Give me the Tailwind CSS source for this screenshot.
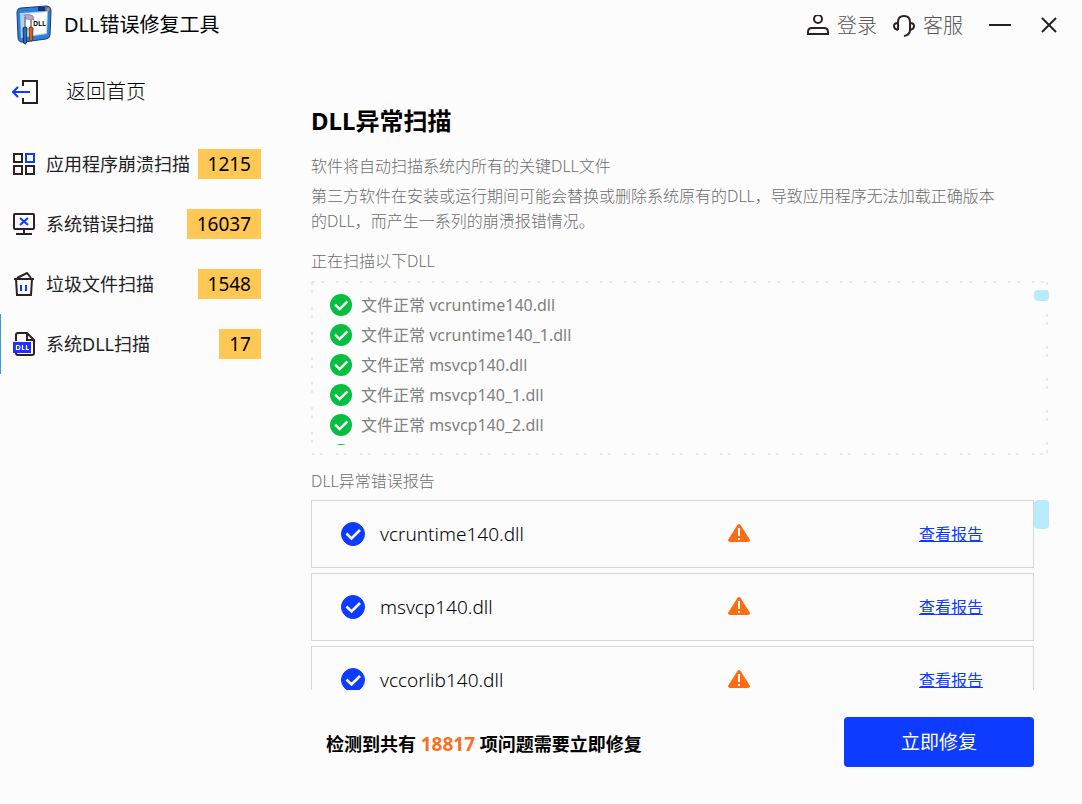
<!DOCTYPE html>
<html lang="zh-CN">
<head>
  <meta charset="UTF-8" />
  <meta name="viewport" content="width=device-width, initial-scale=1.0" />
  <title>DLL错误修复工具</title>
  <script src="https://cdn.jsdelivr.net/npm/@tailwindcss/browser@4"></script>
</head>
<body class="bg-[#fcfcfc] text-[#222] h-screen flex flex-col overflow-hidden font-['Noto_Sans','Noto_Sans_CJK_SC',sans-serif]">

  <!-- Shared icons -->
  <svg class="hidden">
    <symbol id="tick" viewBox="0 0 24 24">
      <path d="M5.500 11.500l5 5L19 8" fill="none" stroke="#fff" stroke-width="2.600" />
    </symbol>
    <symbol id="warn" viewBox="0 0 22 20">
      <path d="M9.400 1Q11-.8 12.600 1L21.600 15.200Q22.600 18 20 18H2Q-.6 18 .4 15.200Z" fill="#ff6b12" />
      <path d="M10 4h2v8h-2zM10 14h2v2h-2z" fill="#fff" />
    </symbol>
  </svg>

  <!-- Title bar -->
  <header class="flex items-center justify-between h-[50px] pl-4 pr-6 shrink-0">
    <div class="flex items-center gap-3">
      <svg class="w-9 h-10" viewBox="0 0 36 40">
        <path d="M5 3L30 1Q35 1 35 6L34 30Q34 33 30 34L8 37Q2 38 2 32L1 8Q1 3 5 3Z" fill="#2f7fd6" stroke="#173a78" />
        <path d="M4 8L32 6L31 29L5 33Z" fill="#a9d3f5" />
        <path d="M8 9L31 7L30 28L9 31Z" fill="#fff" />
        <path d="M22 2h7v4h-7z" fill="#16337a" />
        <circle cx="32" cy="4.500" r="1.800" fill="#e07a2a" />
        <path d="M8 10q5-2 9 1l1 4-8-1z" fill="#b9a5c8" stroke="#6d5a78" stroke-width=".6" />
        <path d="M9 12v13M15 15v10" stroke="#777" stroke-width="1.500" />
        <path d="M7 23q2-2 4 0l-.5 15q-1 2-3 0z" fill="#1f6fc0" stroke="#16305c" />
        <path d="M13 23q2-2 4 0l-.5 12q-1 2-3 0z" fill="#d2641e" stroke="#7a3510" />
        <text x="17" y="21" font-size="7" font-weight="bold" fill="#111">DLL</text>
      </svg>
      <h1 class="text-xl leading-6 text-black">DLL错误修复工具</h1>
    </div>
    <div class="flex items-center">
      <button class="flex items-center gap-2 mr-4 pt-0.5 text-xl leading-6 text-[#555] font-light">
        <svg class="w-[22px] h-[22px]" viewBox="0 0 22 22" fill="none" stroke="#2b2126" stroke-width="2">
          <circle cx="11" cy="4" r="4" />
          <path d="M1 19v-2q0-4 4-4h12q4 0 4 4v2z" />
        </svg>
        登录
      </button>
      <button class="flex items-center gap-2 mr-[26px] pt-0.5 text-xl leading-6 text-[#555] font-light">
        <svg class="w-[22px] h-[22px]" viewBox="0 0 22 22" fill="none" stroke="#2b2126" stroke-width="2">
          <path d="M5 15V7q0-6 6-6t6 6v8q0 5-6 6" />
          <path d="M5 8Q1 8 1 11t4 4M17 8q4 0 4 3t-4 4" />
        </svg>
        客服
      </button>
      <button aria-label="最小化" class="mr-[29px]">
        <svg class="w-[22px] h-[18px]" viewBox="0 0 22 18" stroke="#222" stroke-width="2"><path d="M0 9h22" /></svg>
      </button>
      <button aria-label="关闭">
        <svg class="w-[18px] h-[18px]" viewBox="0 0 18 18" stroke="#222" stroke-width="2"><path d="M2 2l14 14M16 2L2 16" /></svg>
      </button>
    </div>
  </header>

  <div class="flex flex-1 min-h-0">

    <!-- Sidebar -->
    <nav class="w-[281px] shrink-0 pt-6">
      <a href="#" class="flex items-center gap-[26px] h-9 pl-3 mb-6 text-xl leading-6 font-light text-black">
        <svg class="w-7 h-[26px]" viewBox="0 0 28 26" fill="none" stroke-width="2">
          <path d="M11 7V2h14v22H11v-5" stroke="#222" />
          <path d="M18 13H1M6 8l-5 5 5 5" stroke="#0d3bff" />
        </svg>
        返回首页
      </a>
      <a href="#" class="flex items-center h-[60px] pl-3 pr-5 text-lg leading-6 border-l border-transparent">
        <svg class="w-[22px] h-[22px] mr-[11px]" viewBox="0 0 22 22" fill="none" stroke="#2b2126" stroke-width="2">
          <path d="M1 1h8v8H1zM1 13h8v8H1zM13 13h8v8h-8z" />
          <path d="M13 1h8v8h-8z" stroke="#0d3bff" />
        </svg>
        应用程序崩溃扫描
        <span class="ml-auto bg-[#ffc753] text-black text-[19px] leading-[30px] px-[10px]">1215</span>
      </a>
      <a href="#" class="flex items-center h-[60px] pl-3 pr-5 text-lg leading-6 border-l border-transparent">
        <svg class="w-[22px] h-[22px] mr-[11px]" viewBox="0 0 22 22" fill="none" stroke="#2b2126" stroke-width="2">
          <rect x="1" y="1" width="20" height="15" rx="1" />
          <path d="M11 17v4M3 21h16" />
          <path d="M7 5l8 7M15 5l-8 7" stroke="#0d3bff" />
        </svg>
        系统错误扫描
        <span class="ml-auto bg-[#ffc753] text-black text-[19px] leading-[30px] px-[10px]">16037</span>
      </a>
      <a href="#" class="flex items-center h-[60px] pl-3 pr-5 text-lg leading-6 border-l border-transparent">
        <svg class="w-[22px] h-6 mr-[11px]" viewBox="0 0 22 24" fill="none" stroke="#2b2126" stroke-width="2">
          <path d="M1 7h20M3 7l1 16h14l1-16" />
          <path d="M4 6l10-5 4 5" />
          <path d="M8 13v6M13 13v6" stroke="#0d3bff" />
        </svg>
        垃圾文件扫描
        <span class="ml-auto bg-[#ffc753] text-black text-[19px] leading-[30px] px-[10px]">1548</span>
      </a>
      <a href="#" aria-current="page" class="flex items-center h-[60px] pl-3 pr-5 text-lg leading-6 border-l border-[#3a9ad9]">
        <svg class="w-[22px] h-6 mr-[11px]" viewBox="0 0 22 24" fill="none" stroke="#2b2126" stroke-width="2">
          <path d="M3 9V3q0-2 2-2h9l7 7v13q0 2-2 2H5q-2 0-2-2" />
          <path d="M14 1v7h7" />
          <rect x="0" y="10" width="18" height="11" fill="#1c33ff" stroke="none" />
          <path d="M3.500 13.500v4h2q1.500 0 1.500-2t-1.500-2zM9.500 13v4.500h2M13.500 13v4.500h2.500" stroke="#fff" stroke-width="1.200" />
        </svg>
        系统DLL扫描
        <span class="ml-auto bg-[#ffc753] text-black text-[19px] leading-[30px] px-[10px]">17</span>
      </a>
    </nav>

    <!-- Scan page -->
    <main class="flex-1 min-w-0 flex flex-col pl-[30px] pr-[33px] pt-[55px] pb-[37px]">
      <h2 class="text-2xl leading-8 font-bold text-black">DLL异常扫描</h2>
      <div class="pt-[17px] pr-12 text-base leading-[25px] text-[#6c6c6c] font-light">
        <p class="mb-[5px]">软件将自动扫描系统内所有的关键DLL文件</p>
        <p>第三方软件在安装或运行期间可能会替换或删除系统原有的DLL，导致应用程序无法加载正确版本的DLL，而产生一系列的崩溃报错情况。</p>
      </div>
      <p class="mt-[15px] text-base leading-[25px] text-[#6c6c6c] font-light">正在扫描以下DLL</p>

      <!-- Scan log -->
      <section class="relative mt-[7px] h-[174px] py-[9px] shrink-0">
        <svg class="absolute inset-0 w-full h-full pointer-events-none" stroke="#d6d6d6" stroke-width="1">
          <line x1="1" y1="1" x2="100%" y2="1" stroke-dasharray="3 6 3 12" />
          <line x1="1" y1="173" x2="100%" y2="173" stroke-dasharray="3 5 3 13" />
          <line x1="1" y1="1" x2="1" y2="172" stroke-dasharray="3 5 3 14" />
          <g class="translate-x-full"><line x1="-2" y1="1" x2="-2" y2="172" stroke-dasharray="3 5 3 21" /></g>
        </svg>
        <div class="flex h-[155px]">
          <ul class="flex-1 overflow-hidden pl-[19px] text-base text-[#808080]">
            <li class="flex items-center gap-[9px] h-[30px]"><svg class="w-[22px] h-[22px] rounded-full bg-[#06bf40]"><use href="#tick" /></svg>文件正常 vcruntime140.dll</li>
            <li class="flex items-center gap-[9px] h-[30px]"><svg class="w-[22px] h-[22px] rounded-full bg-[#06bf40]"><use href="#tick" /></svg>文件正常 vcruntime140_1.dll</li>
            <li class="flex items-center gap-[9px] h-[30px]"><svg class="w-[22px] h-[22px] rounded-full bg-[#06bf40]"><use href="#tick" /></svg>文件正常 msvcp140.dll</li>
            <li class="flex items-center gap-[9px] h-[30px]"><svg class="w-[22px] h-[22px] rounded-full bg-[#06bf40]"><use href="#tick" /></svg>文件正常 msvcp140_1.dll</li>
            <li class="flex items-center gap-[9px] h-[30px]"><svg class="w-[22px] h-[22px] rounded-full bg-[#06bf40]"><use href="#tick" /></svg>文件正常 msvcp140_2.dll</li>
            <li class="flex items-center gap-[9px] h-[30px]"><svg class="w-[22px] h-[22px] rounded-full bg-[#06bf40]"><use href="#tick" /></svg></li>
          </ul>
          <div class="w-[15px] h-[11px] rounded bg-[#b8ecfc]"></div>
        </div>
      </section>

      <p class="mt-[14px] text-base leading-[25px] text-[#6c6c6c] font-light">DLL异常错误报告</p>

      <!-- Report list -->
      <section class="flex flex-1 min-h-0 mt-[6px] overflow-hidden">
        <ul class="flex-1 flex flex-col gap-[5px] text-black">
          <li class="flex items-center h-[68px] shrink-0 pl-[29px] pr-[50px] border border-[#d5d6dc]">
            <label class="relative flex flex-1 items-center gap-[15px] text-[19px] leading-6 font-light">
              <input type="checkbox" checked class="appearance-none w-6 h-6 rounded-full border border-[#0d3bff] checked:bg-[#0d3bff]" />
              <svg class="absolute left-0 w-6 h-6 pointer-events-none"><use href="#tick" /></svg>
              vcruntime140.dll
            </label>
            <svg class="w-[22px] h-5"><use href="#warn" /></svg>
            <a href="#" class="w-[233px] text-right text-base leading-5 text-[#0d3bff] underline">查看报告</a>
          </li>
          <li class="flex items-center h-[68px] shrink-0 pl-[29px] pr-[50px] border border-[#d5d6dc]">
            <label class="relative flex flex-1 items-center gap-[15px] text-[19px] leading-6 font-light">
              <input type="checkbox" checked class="appearance-none w-6 h-6 rounded-full border border-[#0d3bff] checked:bg-[#0d3bff]" />
              <svg class="absolute left-0 w-6 h-6 pointer-events-none"><use href="#tick" /></svg>
              msvcp140.dll
            </label>
            <svg class="w-[22px] h-5"><use href="#warn" /></svg>
            <a href="#" class="w-[233px] text-right text-base leading-5 text-[#0d3bff] underline">查看报告</a>
          </li>
          <li class="flex items-center h-[68px] shrink-0 pl-[29px] pr-[50px] border border-[#d5d6dc]">
            <label class="relative flex flex-1 items-center gap-[15px] text-[19px] leading-6 font-light">
              <input type="checkbox" checked class="appearance-none w-6 h-6 rounded-full border border-[#0d3bff] checked:bg-[#0d3bff]" />
              <svg class="absolute left-0 w-6 h-6 pointer-events-none"><use href="#tick" /></svg>
              vccorlib140.dll
            </label>
            <svg class="w-[22px] h-5"><use href="#warn" /></svg>
            <a href="#" class="w-[233px] text-right text-base leading-5 text-[#0d3bff] underline">查看报告</a>
          </li>
        </ul>
        <div class="w-[15px] h-[29px] rounded bg-[#b8ecfc]"></div>
      </section>

      <!-- Summary -->
      <div class="flex items-center justify-between mt-[27px] px-[15px]">
        <p class="pt-1 text-lg leading-6 font-bold text-black">检测到共有 <span class="text-[19px] text-[#f8701c]">18817</span> 项问题需要立即修复</p>
        <button class="w-[190px] h-[50px] rounded bg-[#0d3bff] text-white text-[19px]">立即修复</button>
      </div>
    </main>
  </div>

</body>
</html>
